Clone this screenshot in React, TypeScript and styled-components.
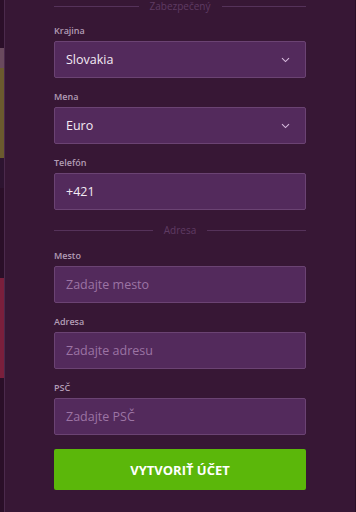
import React from "react";
import styled, { createGlobalStyle } from "styled-components";

const GlobalStyle = createGlobalStyle`
  html, body {
    margin: 0;
    padding: 0;
    background: #2a0f28;
    font-family: "Open Sans", "Liberation Sans", sans-serif;
  }
`;

const Page = styled.div`
  display: flex;
  height: 512px;
  width: 356px;
  overflow: hidden;
`;

const Backdrop = styled.div`
  width: 4px;
  display: flex;
  flex-direction: column;
  flex-shrink: 0;
`;

const BackdropPiece = styled.div<{ $h: number; $bg: string }>`
  height: ${(p) => p.$h}px;
  background: ${(p) => p.$bg};
`;

const Modal = styled.div`
  flex: 1;
  background: #371735;
  border-left: 1px solid #4b2a4c;
  margin-right: 1px;
  padding: 0 49px 0 49px;
`;

const Form = styled.form`
  display: flex;
  flex-direction: column;
`;

const Divider = styled.div<{ $top?: number; $bottom?: number }>`
  display: flex;
  align-items: center;
  gap: 11px;
  height: 12px;
  margin-top: ${(p) => p.$top ?? 0}px;
  margin-bottom: ${(p) => p.$bottom ?? 14}px;
  font-size: 10px;
  color: #5f3b63;
  line-height: 12px;

  &::before,
  &::after {
    content: "";
    flex: 1;
    height: 1px;
    background: #55325a;
  }
`;

const Field = styled.div`
  display: flex;
  flex-direction: column;
  margin-bottom: 13px;
`;

const Label = styled.label`
  font-size: 9px;
  font-weight: 600;
  line-height: 12px;
  color: #b39db5;
  margin-bottom: 4px;
`;

const Box = styled.div`
  height: 37px;
  box-sizing: border-box;
  background: #532a5c;
  border: 1px solid #6b4373;
  border-radius: 2px;
  display: flex;
  align-items: center;
  padding: 0 11px;
`;

const Value = styled.span<{ $placeholder?: boolean }>`
  flex: 1;
  font-size: 12.5px;
  color: ${(p) => (p.$placeholder ? "#9c74a4" : "#f3eaf4")};
`;

const Chevron = styled.svg`
  width: 9px;
  height: 6px;
  margin-right: 4px;
`;

const Submit = styled.button`
  margin-top: 1px;
  height: 41px;
  border: none;
  border-radius: 2px;
  background: #5bb70a;
  color: #ffffff;
  font-family: "Open Sans", "Liberation Sans", sans-serif;
  font-weight: 700;
  font-size: 13px;
  cursor: pointer;
`;

function Select({ label, value }: { label: string; value: string }) {
  return (
    <Field>
      <Label>{label}</Label>
      <Box>
        <Value>{value}</Value>
        <Chevron viewBox="0 0 9 6">
          <path d="M1 1.2 L4.5 4.6 L8 1.2" fill="none" stroke="#d6b9dc" strokeWidth="1.1" />
        </Chevron>
      </Box>
    </Field>
  );
}

function Input({ label, value, placeholder }: { label: string; value?: string; placeholder?: string }) {
  return (
    <Field>
      <Label>{label}</Label>
      <Box>
        <Value $placeholder={!value}>{value || placeholder}</Value>
      </Box>
    </Field>
  );
}

export default function App() {
  return (
    <Page>
      <GlobalStyle />
      <Backdrop>
        <BackdropPiece $h={48} $bg="#2b0f29" />
        <BackdropPiece $h={20} $bg="#6a4a5e" />
        <BackdropPiece $h={90} $bg="#6b5a2e" />
        <BackdropPiece $h={30} $bg="#2d1430" />
        <BackdropPiece $h={90} $bg="#2a0f28" />
        <BackdropPiece $h={100} $bg="#7a1f3c" />
        <BackdropPiece $h={134} $bg="#2a0f28" />
      </Backdrop>
      <Modal>
        <Form>
          <Divider $bottom={13}>Zabezpečený</Divider>
          <Select label="Krajina" value="Slovakia" />
          <Select label="Mena" value="Euro" />
          <Input label="Telefón" value="+421" />
          <Divider $top={1}>Adresa</Divider>
          <Input label="Mesto" placeholder="Zadajte mesto" />
          <Input label="Adresa" placeholder="Zadajte adresu" />
          <Input label="PSČ" placeholder="Zadajte PSČ" />
          <Submit type="button">VYTVORIŤ ÚČET</Submit>
        </Form>
      </Modal>
    </Page>
  );
}
